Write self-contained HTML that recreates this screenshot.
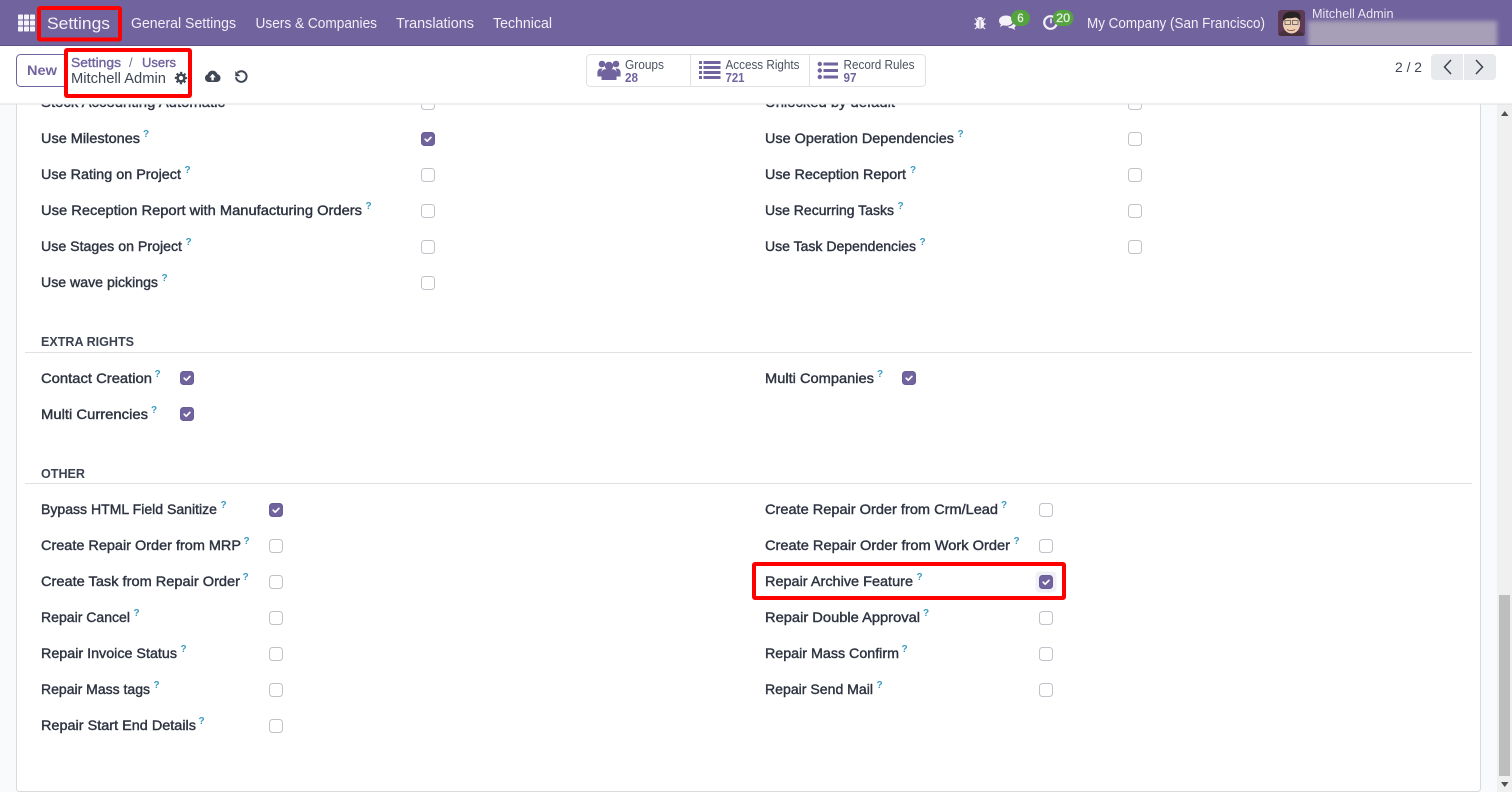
<!DOCTYPE html>
<html lang="en">
<head>
<meta charset="utf-8">
<title>Settings</title>
<style>
html,body{margin:0;padding:0;width:1512px;height:792px;overflow:hidden;background:#f9fafb}
svg{display:block;position:absolute;left:0;top:0}
text{font-family:"Liberation Sans",Arial,sans-serif;white-space:pre}
.l{font-size:14px;fill:#2d3340;stroke:#2d3340;stroke-width:.4px}
.q{font-size:10px;font-weight:700;fill:#3a9cc0}
.h{font-size:13px;font-weight:700;fill:#3b4250}
.n{font-size:14.5px;fill:#f1eff6}
.s{font-size:12.5px;fill:#4b5260}
.v{font-size:12.5px;font-weight:700;fill:#71639e}
.bc{font-size:13px;fill:#71639e;stroke:#71639e;stroke-width:.38px}
.c{fill:#fff;stroke:#bfc4cb;stroke-width:1}
.k{fill:#71639e;stroke:#6a5c97;stroke-width:1}
.t{fill:none;stroke:#fff;stroke-width:1.7;stroke-linecap:round;stroke-linejoin:round}
</style>
</head>
<body>
<svg width="1512" height="792" viewBox="0 0 1512 792" xmlns="http://www.w3.org/2000/svg">
<defs>
<filter id="b" x="-10%" y="-40%" width="120%" height="180%"><feGaussianBlur stdDeviation="2.2"/></filter>
<clipPath id="cp"><rect x="0" y="104" width="1512" height="688"/></clipPath>
<clipPath id="av"><rect x="1278" y="10" width="27" height="26" rx="3"/></clipPath>
<clipPath id="nav"><rect x="0" y="0" width="1512" height="45"/></clipPath>
</defs>

<!-- page background + sheet -->
<rect width="1512" height="792" fill="#f9fafb"/>
<rect x="16.500" y="90" width="1464" height="701.500" rx="3" fill="#fff" stroke="#d8dadd"/>

<!-- scrollbar -->
<rect x="1497" y="104" width="15" height="688" fill="#f0f0f0"/>
<rect x="1499" y="595" width="11" height="181" fill="#bebebe"/>
<path d="M1501 116h7.500l-3.750-5z" fill="#505050"/>
<path d="M1501 782h7.500l-3.750 5z" fill="#505050"/>

<!-- form content -->
<g clip-path="url(#cp)">
<text class="l" x="41" y="107" textLength="184" lengthAdjust="spacingAndGlyphs">Stock Accounting Automatic</text>
<rect class="c" x="421.500" y="96.500" width="13" height="13" rx="3"/>
<text class="l" x="765" y="107" textLength="130" lengthAdjust="spacingAndGlyphs">Unlocked by default</text>
<rect class="c" x="1128.500" y="96.500" width="13" height="13" rx="3"/>
</g>

<g>
<text class="l" x="41" y="143" textLength="99" lengthAdjust="spacingAndGlyphs">Use Milestones</text><text class="q" x="143" y="137">?</text>
<text class="l" x="41" y="179" textLength="140" lengthAdjust="spacingAndGlyphs">Use Rating on Project</text><text class="q" x="184.500" y="173">?</text>
<text class="l" x="41" y="215" textLength="321" lengthAdjust="spacingAndGlyphs">Use Reception Report with Manufacturing Orders</text><text class="q" x="365.500" y="209">?</text>
<text class="l" x="41" y="251" textLength="141" lengthAdjust="spacingAndGlyphs">Use Stages on Project</text><text class="q" x="185.500" y="245">?</text>
<text class="l" x="41" y="287" textLength="117" lengthAdjust="spacingAndGlyphs">Use wave pickings</text><text class="q" x="161.500" y="281">?</text>

<text class="l" x="765" y="143" textLength="189" lengthAdjust="spacingAndGlyphs">Use Operation Dependencies</text><text class="q" x="957.500" y="137">?</text>
<text class="l" x="765" y="179" textLength="141" lengthAdjust="spacingAndGlyphs">Use Reception Report</text><text class="q" x="910" y="173">?</text>
<text class="l" x="765" y="215" textLength="129" lengthAdjust="spacingAndGlyphs">Use Recurring Tasks</text><text class="q" x="897.500" y="209">?</text>
<text class="l" x="765" y="251" textLength="151" lengthAdjust="spacingAndGlyphs">Use Task Dependencies</text><text class="q" x="919.500" y="245">?</text>

<rect class="k" x="421.500" y="132.500" width="13" height="13" rx="3"/><path class="t" d="M425.200 139.200l2 2 3.700-3.800"/>
<rect class="c" x="421.500" y="168.500" width="13" height="13" rx="3"/>
<rect class="c" x="421.500" y="204.500" width="13" height="13" rx="3"/>
<rect class="c" x="421.500" y="240.500" width="13" height="13" rx="3"/>
<rect class="c" x="421.500" y="276.500" width="13" height="13" rx="3"/>
<rect class="c" x="1128.500" y="132.500" width="13" height="13" rx="3"/>
<rect class="c" x="1128.500" y="168.500" width="13" height="13" rx="3"/>
<rect class="c" x="1128.500" y="204.500" width="13" height="13" rx="3"/>
<rect class="c" x="1128.500" y="240.500" width="13" height="13" rx="3"/>

<text class="h" x="41" y="346" textLength="93" lengthAdjust="spacingAndGlyphs">EXTRA RIGHTS</text>
<rect x="25" y="352" width="1447" height="1" fill="#dfe1e4"/>
<text class="l" x="41" y="383" textLength="111" lengthAdjust="spacingAndGlyphs">Contact Creation</text><text class="q" x="154.500" y="377">?</text>
<text class="l" x="41" y="419" textLength="107" lengthAdjust="spacingAndGlyphs">Multi Currencies</text><text class="q" x="151" y="413">?</text>
<text class="l" x="765" y="383" textLength="109" lengthAdjust="spacingAndGlyphs">Multi Companies</text><text class="q" x="877" y="377">?</text>
<rect class="k" x="180.500" y="371.500" width="13" height="13" rx="3"/><path class="t" d="M184.200 378.200l2 2 3.700-3.800"/>
<rect class="k" x="180.500" y="407.500" width="13" height="13" rx="3"/><path class="t" d="M184.200 414.200l2 2 3.700-3.800"/>
<rect class="k" x="902.500" y="371.500" width="13" height="13" rx="3"/><path class="t" d="M906.200 378.200l2 2 3.700-3.800"/>

<text class="h" x="41" y="478" textLength="44" lengthAdjust="spacingAndGlyphs">OTHER</text>
<rect x="25" y="483" width="1447" height="1" fill="#dfe1e4"/>

<text class="l" x="41" y="514" textLength="176" lengthAdjust="spacingAndGlyphs">Bypass HTML Field Sanitize</text><text class="q" x="220.500" y="508">?</text>
<text class="l" x="41" y="550" textLength="200" lengthAdjust="spacingAndGlyphs">Create Repair Order from MRP</text><text class="q" x="243.500" y="544">?</text>
<text class="l" x="41" y="586" textLength="199" lengthAdjust="spacingAndGlyphs">Create Task from Repair Order</text><text class="q" x="242.500" y="580">?</text>
<text class="l" x="41" y="622" textLength="89" lengthAdjust="spacingAndGlyphs">Repair Cancel</text><text class="q" x="133.500" y="616">?</text>
<text class="l" x="41" y="658" textLength="136" lengthAdjust="spacingAndGlyphs">Repair Invoice Status</text><text class="q" x="180.500" y="652">?</text>
<text class="l" x="41" y="694" textLength="109" lengthAdjust="spacingAndGlyphs">Repair Mass tags</text><text class="q" x="153.500" y="688">?</text>
<text class="l" x="41" y="730" textLength="155" lengthAdjust="spacingAndGlyphs">Repair Start End Details</text><text class="q" x="198.500" y="724">?</text>

<rect class="k" x="269.500" y="503.500" width="13" height="13" rx="3"/><path class="t" d="M273.200 510.200l2 2 3.700-3.800"/>
<rect class="c" x="269.500" y="539.500" width="13" height="13" rx="3"/>
<rect class="c" x="269.500" y="575.500" width="13" height="13" rx="3"/>
<rect class="c" x="269.500" y="611.500" width="13" height="13" rx="3"/>
<rect class="c" x="269.500" y="647.500" width="13" height="13" rx="3"/>
<rect class="c" x="269.500" y="683.500" width="13" height="13" rx="3"/>
<rect class="c" x="269.500" y="719.500" width="13" height="13" rx="3"/>

<text class="l" x="765" y="514" textLength="233" lengthAdjust="spacingAndGlyphs">Create Repair Order from Crm/Lead</text><text class="q" x="1001" y="508">?</text>
<text class="l" x="765" y="550" textLength="245" lengthAdjust="spacingAndGlyphs">Create Repair Order from Work Order</text><text class="q" x="1013.500" y="544">?</text>
<text class="l" x="765" y="586" textLength="148" lengthAdjust="spacingAndGlyphs">Repair Archive Feature</text><text class="q" x="916.500" y="580">?</text>
<text class="l" x="765" y="622" textLength="155" lengthAdjust="spacingAndGlyphs">Repair Double Approval</text><text class="q" x="923" y="616">?</text>
<text class="l" x="765" y="658" textLength="134" lengthAdjust="spacingAndGlyphs">Repair Mass Confirm</text><text class="q" x="901.500" y="652">?</text>
<text class="l" x="765" y="694" textLength="108" lengthAdjust="spacingAndGlyphs">Repair Send Mail</text><text class="q" x="876.500" y="688">?</text>

<rect class="c" x="1039.500" y="503.500" width="13" height="13" rx="3"/>
<rect class="c" x="1039.500" y="539.500" width="13" height="13" rx="3"/>
<rect x="1035.500" y="571.500" width="21" height="21" rx="4" fill="#f1f0f6"/>
<rect class="k" x="1039.500" y="575.500" width="13" height="13" rx="3"/><path class="t" d="M1043.200 582.200l2 2 3.700-3.800"/>
<rect class="c" x="1039.500" y="611.500" width="13" height="13" rx="3"/>
<rect class="c" x="1039.500" y="647.500" width="13" height="13" rx="3"/>
<rect class="c" x="1039.500" y="683.500" width="13" height="13" rx="3"/>
</g>

<!-- control panel -->
<rect x="0" y="45" width="1512" height="59" fill="#fff"/>
<rect x="0" y="103.500" width="1512" height="1" fill="#dcdee2"/>

<rect x="16.500" y="54.500" width="51" height="32" rx="4" fill="#fff" stroke="#71639e"/>
<text x="27" y="75" font-size="14" font-weight="700" fill="#71639e" textLength="30" lengthAdjust="spacingAndGlyphs">New</text>

<text class="bc" x="71" y="67" textLength="50" lengthAdjust="spacingAndGlyphs">Settings</text>
<text x="129" y="67" font-size="13" fill="#6b7280">/</text>
<text class="bc" x="142" y="67" textLength="34" lengthAdjust="spacingAndGlyphs">Users</text>
<text x="71" y="83" font-size="14.500" fill="#3f4654" textLength="95" lengthAdjust="spacingAndGlyphs">Mitchell Admin</text>

<!-- gear -->
<circle cx="181" cy="78" r="3.400" fill="none" stroke="#3f4654" stroke-width="2.500"/>
<circle cx="181" cy="78" r="5.300" fill="none" stroke="#3f4654" stroke-width="1.800" stroke-dasharray="2.160 2.000" stroke-dashoffset="1.080"/>
<!-- cloud upload -->
<path d="M209 82c-2.300 0-4-1.700-4-3.900 0-1.800 1.100-3.200 2.700-3.700.5-2.200 2.500-3.800 4.800-3.800 2.400 0 4.400 1.600 4.900 3.700 1.700.2 3.100 1.700 3.100 3.700 0 2.200-1.700 4-4 4z" fill="#3f4654"/>
<path d="M212.600 73.800l-3.200 3.600h2v3h2.400v-3h2z" fill="#fff"/>
<!-- undo -->
<path d="M237.500 72.800a5.300 5.300 0 1 1-1.500 4.400" fill="none" stroke="#3f4654" stroke-width="2"/>
<path d="M235.300 71v5.200h5.200z" fill="#3f4654"/>

<!-- stat buttons -->
<rect x="586.500" y="54.500" width="339" height="32" rx="4" fill="#fff" stroke="#dfe1e5"/>
<rect x="690" y="55" width="1" height="31" fill="#dfe1e5"/>
<rect x="809" y="55" width="1" height="31" fill="#dfe1e5"/>
<g fill="#71639e">
<circle cx="602" cy="64" r="3.300"/><circle cx="616" cy="64" r="3.300"/><circle cx="609" cy="66" r="4.200"/>
<path d="M597.400 76.500v-3.800c0-2.500 1.500-4.200 4-4.200h1.100c-.6.900-.9 1.900-.9 3.200v4.800zM620.600 76.500v-3.800c0-2.500-1.500-4.200-4-4.200h-1.100c.6.900.9 1.900.9 3.200v4.800z"/>
<path d="M601.500 80v-6.800c0-2.400 1.500-3.900 3.600-3.900h7.800c2.100 0 3.600 1.500 3.600 3.900v6.800z"/>
</g>
<g fill="#71639e">
<rect x="699" y="61" width="3" height="3"/><rect x="703.500" y="61" width="17" height="3"/>
<rect x="699" y="66" width="3" height="3"/><rect x="703.500" y="66" width="17" height="3"/>
<rect x="699" y="71" width="3" height="3"/><rect x="703.500" y="71" width="17" height="3"/>
<rect x="699" y="76" width="3" height="3"/><rect x="703.500" y="76" width="17" height="3"/>
</g>
<g fill="#71639e">
<circle cx="819.800" cy="64" r="2.200"/><rect x="823.500" y="62.500" width="14.500" height="3"/>
<circle cx="819.800" cy="70.500" r="2.200"/><rect x="823.500" y="69" width="14.500" height="3"/>
<circle cx="819.800" cy="77" r="2.200"/><rect x="823.500" y="75.500" width="14.500" height="3"/>
</g>
<text class="s" x="625" y="69" textLength="39" lengthAdjust="spacingAndGlyphs">Groups</text>
<text class="v" x="625" y="82" textLength="13" lengthAdjust="spacingAndGlyphs">28</text>
<text class="s" x="725.500" y="69" textLength="74" lengthAdjust="spacingAndGlyphs">Access Rights</text>
<text class="v" x="725.500" y="82" textLength="19" lengthAdjust="spacingAndGlyphs">721</text>
<text class="s" x="843.500" y="69" textLength="71" lengthAdjust="spacingAndGlyphs">Record Rules</text>
<text class="v" x="843.500" y="82" textLength="13" lengthAdjust="spacingAndGlyphs">97</text>

<!-- pager -->
<text x="1395" y="72" font-size="14" fill="#3f4654" textLength="27" lengthAdjust="spacingAndGlyphs">2 / 2</text>
<rect x="1431" y="54" width="65" height="26" rx="4" fill="#e7e9ed"/>
<rect x="1463" y="54" width="1" height="26" fill="#fff"/>
<path d="M1451 60l-6.500 7 6.500 7" fill="none" stroke="#3b4250" stroke-width="1.500"/>
<path d="M1476 60l6.500 7-6.500 7" fill="none" stroke="#3b4250" stroke-width="1.500"/>

<!-- navbar -->
<rect x="0" y="0" width="1512" height="45" fill="#71639e"/>
<rect x="0" y="45" width="1512" height="1" fill="#5d5087"/>
<g fill="#f4f2f8">
<rect x="18" y="14.500" width="5" height="5" rx=".8"/><rect x="24" y="14.500" width="5" height="5" rx=".8"/><rect x="30" y="14.500" width="5" height="5" rx=".8"/>
<rect x="18" y="20.500" width="5" height="5" rx=".8"/><rect x="24" y="20.500" width="5" height="5" rx=".8"/><rect x="30" y="20.500" width="5" height="5" rx=".8"/>
<rect x="18" y="26.500" width="5" height="5" rx=".8"/><rect x="24" y="26.500" width="5" height="5" rx=".8"/><rect x="30" y="26.500" width="5" height="5" rx=".8"/>
</g>
<text x="47" y="29" font-size="17" fill="#f4f2f8" textLength="63" lengthAdjust="spacingAndGlyphs">Settings</text>
<text class="n" x="131" y="28" textLength="105" lengthAdjust="spacingAndGlyphs">General Settings</text>
<text class="n" x="255.500" y="28" textLength="121.500" lengthAdjust="spacingAndGlyphs">Users &amp; Companies</text>
<text class="n" x="396" y="28" textLength="78" lengthAdjust="spacingAndGlyphs">Translations</text>
<text class="n" x="493" y="28" textLength="59" lengthAdjust="spacingAndGlyphs">Technical</text>

<!-- bug -->
<g fill="#f4f2f8">
<ellipse cx="980" cy="24" rx="4.200" ry="5"/>
<path d="M976.800 19.300a3.300 3 0 0 1 6.400 0z"/>
</g>
<path d="M975 18.500l2.500 2.500M985 18.500l-2.500 2.500M974.300 24h3M985.700 24h-3M975 29l2.500-2.500M985 29l-2.500-2.500" stroke="#f4f2f8" stroke-width="1.200" fill="none"/>
<path d="M980 20v9" stroke="#71639e" stroke-width=".8"/>
<!-- comments -->
<path d="M1006 15.500c-4 0-7 2.300-7 5.200 0 1.500.8 2.800 2 3.700l-1.200 2.700 3.400-1.800c.9.300 1.800.4 2.800.4 4 0 7-2.300 7-5s-3-5.200-7-5.200z" fill="#f4f2f8"/>
<path d="M1014 21.500c0 2.900-2.900 5-6.500 5.300 1 1 2.600 1.500 4.300 1.500l3.500 1.700-1-2.500c1-.7 1.600-1.700 1.600-2.800 0-1.100-.7-2.200-1.900-3z" fill="#f4f2f8"/>
<rect x="1011" y="10" width="19" height="16" rx="8" fill="#55a33f"/>
<text x="1020.500" y="22" font-size="11.500" fill="#e9f2e4" stroke="#e9f2e4" stroke-width=".25" text-anchor="middle">6</text>
<!-- clock -->
<circle cx="1050.500" cy="22.500" r="6.300" fill="none" stroke="#f4f2f8" stroke-width="2.200"/>
<path d="M1051 18.500v4.800" stroke="#f4f2f8" stroke-width="1.500"/>
<rect x="1053" y="10" width="20.500" height="16" rx="8" fill="#55a33f"/>
<text x="1063.200" y="22" font-size="11.500" fill="#e9f2e4" stroke="#e9f2e4" stroke-width=".25" text-anchor="middle" textLength="14" lengthAdjust="spacingAndGlyphs">20</text>

<text class="n" x="1087" y="28" textLength="178" lengthAdjust="spacingAndGlyphs">My Company (San Francisco)</text>

<!-- avatar -->
<g clip-path="url(#av)">
<rect x="1278" y="10" width="27" height="26" fill="#5c3a54"/>
<path d="M1278 36c1-4 5-6 13-6s12 2 14 6z" fill="#48303f"/>
<ellipse cx="1291.500" cy="24" rx="8.500" ry="9.500" fill="#efcfb3"/>
<path d="M1283 21c-1.500-6 3-9.500 9-9.500 4 0 8 1 8 3.500 1 2 .5 4-.3 6-1-2-2.500-3.500-4.700-3.500-3 .8-6.500.8-8.500.8-1 .8-2.200 1.700-3.500 2.700z" fill="#2a2325"/>
<rect x="1285" y="20.500" width="5.500" height="4" fill="none" stroke="#77706e" stroke-width="1"/>
<rect x="1292.500" y="20.500" width="5.500" height="4" fill="none" stroke="#77706e" stroke-width="1"/>
<path d="M1287 29.500c2 1.500 6 1.500 8 0" fill="none" stroke="#8a5a48" stroke-width="1"/>
</g>
<text x="1312" y="18" font-size="12.500" fill="#ebe8f2" textLength="81.500" lengthAdjust="spacingAndGlyphs">Mitchell Admin</text>

<!-- blurred email -->
<g clip-path="url(#nav)">
<rect x="1308" y="21" width="189" height="30" fill="#a79fb8" filter="url(#b)"/>
</g>

<!-- red highlight boxes -->
<rect x="39" y="8" width="81" height="31.500" fill="none" stroke="#f00" stroke-width="4" rx="1"/>
<rect x="66" y="50" width="124" height="46" fill="none" stroke="#f00" stroke-width="4" rx="1"/>
<rect x="754" y="564" width="310" height="34" fill="none" stroke="#f00" stroke-width="4" rx="1"/>
</svg>
</body>
</html>
